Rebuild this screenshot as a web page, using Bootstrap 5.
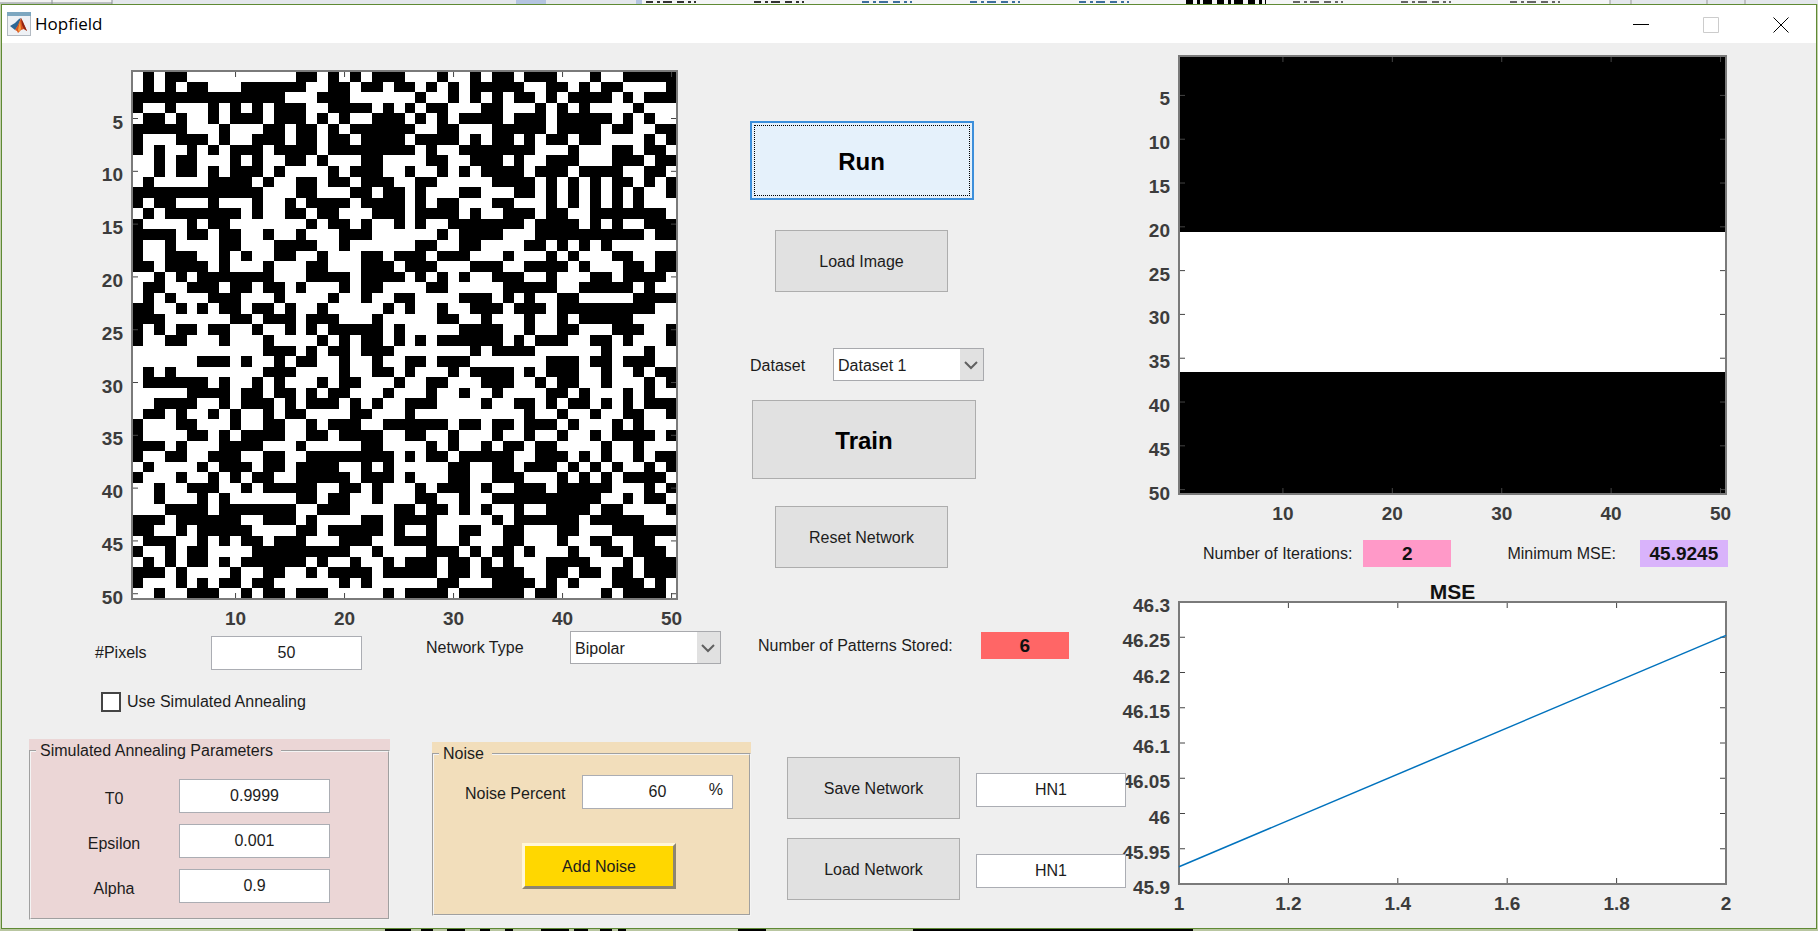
<!DOCTYPE html>
<html lang="en">
<head>
<meta charset="utf-8">
<meta name="viewport" content="width=device-width, initial-scale=1">
<title>Hopfield</title>
<link href="https://cdn.jsdelivr.net/npm/bootstrap@5.3.0/dist/css/bootstrap.min.css" rel="stylesheet">
<style>
  body { font: 16px/20px "Liberation Sans", Arial, sans-serif; color: #1c1c1c; background: #c3d0ac; }
  .desk-top, .desk-bottom { display: block; width: 100%; flex: none; }
  .app-window { background: #efefef; border: 1px solid #5f8a34; margin: 0 1px; }
  .title-bar { height: 38px; background: #fff; font: 17px/24px "Open Sans", "Noto Sans", sans-serif; color: #000; padding-left: 5px; }
  .win-btn { width: 70px; height: 38px; background: none; border: 0; padding: 0; }
  .work-area { display: grid; grid-template-columns: 748fr 376fr 690fr; }
  .work-area > * { min-width: 0; }
  .plot { display: block; width: 100%; height: auto; overflow: visible; }
  .plot text { font: bold 19px "Liberation Sans", Arial, sans-serif; fill: #3c3c3c; }
  .plot .plot-title { font-size: 21px; fill: #111; }
  .axis-box { fill: none; stroke: #7a7a7a; stroke-width: 2; }
  .tick { stroke: #444; stroke-width: 1; fill: none; }

  .form-control, .form-select, .btn { font: inherit; border-radius: 0; color: #1c1c1c; }
  .form-control { width: 151px; height: 34px; padding: 0; text-align: center; border: 1px solid #abadb3; background: #fff; }
  .form-select { width: 151px; height: 33px; padding: 2px 26px 0 4px; border: 1px solid #a8a9ad;
    background: #fff url("data:image/svg+xml,%3Csvg xmlns='http://www.w3.org/2000/svg' width='23' height='31'%3E%3Crect width='23' height='31' fill='%23e1e1e1'/%3E%3Cpath d='M5 13l6 6 6-6' fill='none' stroke='%23606060' stroke-width='2'/%3E%3C/svg%3E") no-repeat right center; background-size: 23px 31px; }
  .btn-gray { background: #e1e1e1; border: 1px solid #adadad; padding: 2px 0 0; width: 173px; height: 62px; }
  .btn-big { width: 224px; height: 79px; font-size: 24px; font-weight: bold; color: #000; }
  .btn-run { background: #e5f1fb; border: 2px solid #3c8fdb; outline: 1px dotted #000; outline-offset: -5px; }
  .btn-noise { width: 154px; height: 46px; padding: 1px 0 0; background: #ffd700; border: 3px solid; border-color: #fff6d8 #8d8571 #8d8571 #fff6d8; }
  .readout { width: 88px; height: 27px; font-size: 19px; line-height: 27px; font-weight: bold; text-align: center; color: #111; }
  .readout-red { background: #ff6666; }
  .readout-pink { background: #ff99c8; }
  .readout-violet { background: #d9b3fb; }

  .pixels-row { padding: 1px 0 0 93px; }
  .pixels-label { width: 116px; }
  .network-label { width: 144px; }
  .network-group { margin-left: 64px; }
  .pixels-group { padding-top: 5px; }
  .anneal-check { margin: 22px 0 0 99px; gap: 6px; }
  .anneal-check .form-check-input { width: 20px; height: 20px; margin: 0; float: none; border: 2px solid #444; border-radius: 0; background-color: #fff; }
  .panels { margin-top: 27px; padding-left: 27px; gap: 42px; }
  .param-panel { padding-top: 2px; }
  .param-panel fieldset { border: 2px groove #f4f4f4; height: 100%; }
  .param-panel legend { float: none; width: auto; margin: 0 0 0 5px; padding: 0 8px 0 4px; font-size: 16px; line-height: 20px; }
  .panel-rose, .panel-rose legend { background: #ebd6d6; }
  .panel-sand, .panel-sand legend { background: #f2debb; }
  .panel-rose { width: 361px; height: 181px; }
  .panel-sand { width: 319px; height: 174px; margin-top: 3px; }
  .panel-rose label { width: 130px; text-align: center; padding-top: 6px; }
  .param-rows { padding: 18px 0 0 18px; gap: 11px; }
  .noise-row { padding: 11px 0 0 31px; }
  .noise-row label { width: 117px; padding-top: 4px; }
  .percent-sign { position: absolute; right: 10px; top: 5px; }
  .noise-action { padding: 34px 0 0 88px; }

  .controls { position: relative; z-index: 1; padding-top: 78px; }
  .center-stack { width: 223px; }
  .gap-load { margin-top: 30px; }
  .dataset-row { margin-top: 56px; }
  .dataset-row label { width: 83px; padding-top: 2px; }
  .gap-train { margin: 19px 0 0 2px; }
  .gap-reset { margin-top: 27px; }
  .stored-row { margin: 64px 0 0 8px; gap: 28px; }
  .network-rows { margin: 98px 0 0 37px; gap: 19px; }
  .network-rows > div { gap: 16px; }
  .network-rows .form-control { margin-top: 16px; width: 150px; }
  .score-row { padding: 10px 0 9px 77px; }
  .score-mse { margin-left: 52px; padding-left: 4px; }
  .score-iterations { margin-left: 11px; }
</style>
</head>
<body class="d-flex flex-column min-vh-100">

<svg class="desk-top" height="4" viewBox="0 0 1818 4" preserveAspectRatio="none" aria-hidden="true">
  <rect width="1818" height="4" fill="#e4e7ec"/>
  <rect width="112" height="3" fill="#f2f2f2"/>
  <path d="M0 3h112M52 0v4M112 0v4" stroke="#8a8f94"/>
  <path d="M516 0h30v4h-30zM636 0h6v4h-6zM740 0h6v4h-6z" fill="#b4c4e0"/>
  <rect x="642" width="968" height="4" fill="#f4f5f6"/>
  <g fill="none" stroke-width="2" stroke-dasharray="7 4 3 3 9 5">
    <path d="M646 2h50M754 2h50" stroke="#333"/>
    <path d="M862 2h50M970 2h50M1079 2h50" stroke="#3e6f9d"/>
    <path d="M1186 2h80" stroke="#000" stroke-width="4"/>
    <path d="M1293 2h50M1401 2h50M1510 2h50" stroke="#666"/>
  </g>
  <path d="M1610 0v4M1631 0v4M1707 0v4M1745 0v4" stroke="#999"/>
</svg>

<div class="app-window d-flex flex-column flex-grow-1">
  <header class="title-bar d-flex align-items-center">
    <svg width="24" height="24" viewBox="0 0 24 24" aria-hidden="true">
      <rect x=".5" y=".5" width="23" height="23" fill="#eef1f5" stroke="#b3bac2"/>
      <rect width="24" height="4" fill="#7da7c0"/>
      <path d="M3 14l5-3 4-4 2-1-3 8-3 4z" fill="#2d6794"/>
      <path d="M8 18l3-5 3-7 2 4 4 9-3-2-3 1-3 3-1-2z" fill="#d9541e"/>
      <path d="M14 6l2 4 4 9-3-2-2-4z" fill="#8e2415"/>
      <path d="M13 9l1 8-2 3-1-2z" fill="#f5a142"/>
    </svg>
    <span class="ms-1 me-auto">Hopfield</span>
    <button class="win-btn" type="button" aria-label="Minimize"><svg width="16" height="16"><path d="M0 7.5h16" stroke="#000"/></svg></button>
    <button class="win-btn" type="button" aria-label="Maximize" disabled><svg width="16" height="16"><path d="M.5.5h15v15H.5z" fill="none" stroke="#ccc"/></svg></button>
    <button class="win-btn" type="button" aria-label="Close"><svg width="16" height="16"><path d="M.5.5l15 15M15.5.5l-15 15" stroke="#000"/></svg></button>
  </header>

  <main class="work-area flex-grow-1">
    <section>
      <svg class="plot" id="inputPlot" viewBox="2 43 748 587" role="img" aria-label="Noisy input pattern"></svg>
      <div class="pixels-row d-flex align-items-start">
        <div class="pixels-group d-flex align-items-center">
          <label class="pixels-label" for="pixels">#Pixels</label>
          <input class="form-control" id="pixels" value="50">
        </div>
        <div class="network-group d-flex align-items-center">
          <label class="network-label" for="networkType">Network Type</label>
          <select class="form-select" id="networkType"><option>Bipolar</option><option>Binary</option></select>
        </div>
      </div>
      <div class="anneal-check d-flex align-items-center">
        <input class="form-check-input" type="checkbox" id="useAnnealing">
        <label for="useAnnealing">Use Simulated Annealing</label>
      </div>
      <div class="panels d-flex align-items-start">
        <div class="param-panel panel-rose flex-shrink-0">
          <fieldset>
            <legend>Simulated Annealing Parameters</legend>
            <div class="param-rows d-flex flex-column">
              <div class="d-flex align-items-center"><label for="t0">T0</label><input class="form-control" id="t0" value="0.9999"></div>
              <div class="d-flex align-items-center"><label for="epsilon">Epsilon</label><input class="form-control" id="epsilon" value="0.001"></div>
              <div class="d-flex align-items-center"><label for="alpha">Alpha</label><input class="form-control" id="alpha" value="0.9"></div>
            </div>
          </fieldset>
        </div>
        <div class="param-panel panel-sand flex-shrink-0">
          <fieldset>
            <legend>Noise</legend>
            <div class="noise-row d-flex align-items-center">
              <label for="noisePercent">Noise Percent</label>
              <div class="position-relative">
                <input class="form-control" id="noisePercent" value="60">
                <span class="percent-sign">%</span>
              </div>
            </div>
            <div class="noise-action"><button class="btn btn-noise" type="button">Add Noise</button></div>
          </fieldset>
        </div>
      </div>
    </section>

    <section class="controls">
      <div class="center-stack d-flex flex-column align-items-center">
        <button class="btn btn-gray btn-big btn-run" type="button">Run</button>
        <button class="btn btn-gray gap-load" type="button">Load Image</button>
      </div>
      <div class="dataset-row d-flex align-items-center">
        <label for="dataset">Dataset</label>
        <select class="form-select" id="dataset"><option>Dataset 1</option><option>Dataset 2</option></select>
      </div>
      <button class="btn btn-gray btn-big gap-train d-block" type="button">Train</button>
      <div class="center-stack d-flex justify-content-center gap-reset">
        <button class="btn btn-gray" type="button">Reset Network</button>
      </div>
      <div class="stored-row d-flex align-items-center">
        <span>Number of Patterns Stored:</span>
        <output class="readout readout-red">6</output>
      </div>
      <div class="network-rows d-flex flex-column">
        <div class="d-flex align-items-start">
          <button class="btn btn-gray" type="button">Save Network</button>
          <input class="form-control" aria-label="Save network name" value="HN1">
        </div>
        <div class="d-flex align-items-start">
          <button class="btn btn-gray" type="button">Load Network</button>
          <input class="form-control" aria-label="Load network name" value="HN1">
        </div>
      </div>
    </section>

    <section>
      <svg class="plot" id="outputPlot" viewBox="1126 43 690 487" role="img" aria-label="Recalled pattern"></svg>
      <div class="score-row d-flex align-items-center">
        <span>Number of Iterations:</span>
        <output class="readout readout-pink score-iterations">2</output>
        <span class="score-mse">Minimum MSE:</span>
        <output class="readout readout-violet ms-4 px-1">45.9245</output>
      </div>
      <svg class="plot" id="msePlot" viewBox="1126 576 690 342" role="img" aria-label="MSE per iteration"></svg>
    </section>
  </main>
</div>

<svg class="desk-bottom" height="2" viewBox="0 0 1818 2" preserveAspectRatio="none" aria-hidden="true">
  <rect width="1818" height="2" fill="#b9c6a1"/>
  <path d="M385 1h26M421 1h12M447 1h18M480 1h10M505 1h8M541 1h28M574 1h14M600 1h12M618 1h8M738 1h28M913 1h280" stroke="#000" stroke-width="2"/>
</svg>

<script src="https://cdn.jsdelivr.net/npm/bootstrap@5.3.0/dist/js/bootstrap.bundle.min.js"></script>
<script>
// White runs of each of the 50 rows, as start-end column pairs.
const pattern = `0-1 2-3 5-15 17-18 19-20 21-22 25-28 29-31 32-33 35-36 39-42 43-45
0-1 2-3 4-5 7-10 16-18 20-21 23-24 26-27 28-29 30-31 36-38 40-41 42-43 45-49
14-17 20-26 27-29 30-31 32-33 34-35 37-38 39-40 44-45 46-47
1-3 4-7 8-9 10-11 12-13 16-18 22-23 24-25 26-27 29-32 34-37 38-39 40-41 42-46 47-50
0-1 3-4 5-7 8-9 12-13 16-17 18-19 20-22 25-26 27-28 29-30 34-35 38-39 44-45 46-47 48-50
5-8 9-12 14-15 17-18 19-20 26-28 30-33 38-39 43-44 46-48
1-4 7-8 9-11 14-15 17-18 20-21 25-26 30-31 32-33 35-36 37-38 40-41 43-47 48-49
1-2 3-5 6-7 8-9 12-13 17-18 26-27 28-30 37-40 41-44 46-47 49-50
0-2 3-4 6-9 10-11 12-14 16-17 18-21 23-27 29-31 34-35 36-38 41-44 47-48
0-2 3-4 6-7 8-9 12-13 14-18 19-20 23-25 26-28 29-30 31-32 36-37 40-41 45-47 49-50
0-1 2-7 11-12 13-15 17-18 20-21 24-26 28-33 37-38 39-40 41-42 43-44 46-47 48-49
12-15 17-20 22-23 25-26 27-30 32-35 37-38 39-40 41-42 43-44 45-46 47-49
1-2 4-7 8-11 12-14 15-16 20-21 25-26 27-28 30-33 35-38 39-40 41-42 43-44 45-46 47-50
0-1 2-3 10-11 12-14 16-17 19-22 25-26 30-31 32-34 37-38 40-42 49-50
1-5 6-7 9-16 17-18 20-21 22-24 25-26 27-29 36-37 41-42 43-44 45-47
4-5 7-8 10-12 13-15 16-19 22-28 29-30 34-37 47-48
1-3 4-8 10-13 17-19 20-26 28-30 32-36 38-39 40-41 42-43 44-50
1-3 6-8 9-10 11-13 15-17 18-21 23-24 27-28 31-34 35-38 39-40 41-44 46-48
2-3 7-8 9-12 13-16 18-21 24-25 28-31 34-36 40-41 42-45 47-48
0-2 3-4 5-6 13-16 20-21 25-26 27-28 29-30 31-33 36-38 39-42 44-45 49-50
0-1 3-5 8-9 11-12 14-15 16-19 20-21 23-27 29-34 39-41 46-47 48-50
0-1 2-3 4-7 10-13 14-18 19-21 22-24 26-30 33-34 35-36 37-39 41-46
2-4 5-6 7-8 10-11 13-14 15-17 18-23 24-25 26-28 29-31 34-35 38-39 48-50
3-9 11-12 15-16 19-22 23-28 30-32 33-36 37-39 40-41 46-50
1-2 3-4 6-7 9-11 12-14 15-16 17-18 23-24 25-30 34-36 37-39 41-44 47-49
1-3 5-8 9-12 13-17 18-19 20-21 23-24 25-26 27-28 34-35 36-37 40-42 44-45 46-49
0-12 15-16 17-18 20-21 24-31 32-33 37-43 44-47 48-50
0-6 9-10 11-13 14-15 17-19 20-22 23-25 27-28 31-38 41-42 44-45 48-50
0-1 2-3 4-12 15-19 20-22 24-25 26-29 30-31 35-36 37-38 41-43 44-46 47-48
0-1 7-8 9-11 12-13 14-17 18-19 21-24 25-27 29-32 35-37 38-39 41-43 44-47 48-49
0-5 9-10 12-13 15-16 17-18 20-23 24-27 28-30 31-33 34-38 40-41 42-45 46-47 48-50
0-2 6-8 9-10 13-14 15-16 19-20 21-22 23-25 28-32 33-35 37-38 39-40 42-43 44-45 46-47
0-1 3-4 5-7 8-9 10-12 13-14 16-20 22-25 26-36 37-39 40-42 43-45 47-49
1-4 6-9 10-12 14-16 17-18 21-23 29-30 32-33 35-36 39-40 41-44 45-46 47-50
1-5 7-8 9-10 14-16 18-19 23-25 27-29 30-33 34-36 37-39 40-42 43-44 48-49
3-4 5-8 12-15 16-21 23-27 28-29 30-32 33-34 36-37 39-43 44-46 47-50
1-3 5-7 10-12 14-16 24-25 26-27 29-30 35-37 40-41 42-43 44-46 47-48
0-1 2-6 7-8 11-12 14-15 19-21 22-23 24-29 31-33 35-36 39-40 41-42 43-44 45-47 48-49
1-4 5-7 8-9 10-11 13-15 20-21 24-25 26-29 31-33 36-39 40-41 42-43 44-45 49-50
0-2 3-5 8-10 11-12 17-19 21-22 23-26 27-28 31-32 33-35 38-39 44-47 48-49
0-2 3-6 7-8 9-15 17-18 20-22 23-26 28-30 31-33 43-45 46-47 49-50
0-3 7-8 15-17 20-24 26-27 29-30 31-32 33-35 36-38 42-43 45-49
3-4 10-12 15-16 17-21 23-24 28-33 34-35 41-42 47-50
2-4 5-6 11-15 17-18 23-24 25-27 28-30 32-34 36-39 41-44
0-1 4-6 7-8 9-10 12-13 16-19 22-24 28-30 31-34 36-39 40-42 44-46 48-50
1-3 4-5 7-11 20-22 23-27 30-31 32-33 35-36 37-40 41-43 45-46 49-50
0-1 2-3 4-5 7-8 9-10 16-17 18-20 21-23 24-25 28-29 31-32 33-34 35-38 42-45 46-47
3-4 5-9 10-12 14-16 17-18 22-23 28-29 31-32 36-38 40-41 43-44 46-47
1-4 5-6 7-8 10-11 13-19 20-21 22-28 30-33 37-38 39-40 41-44 47-48 49-50
0-2 3-5 8-10 11-12 14-15 18-23 24-25 29-30 36-37 39-43 44-45 49-50`.split("\n");

// Frame, tick marks and tick labels; xs and ys hold [fraction of the axis, label].
function axes(b, xs, ys) {
  const x2 = b.x + b.w, y2 = b.y + b.h;
  let ticks = "", labels = "";
  for (const [f, t] of xs) {
    const x = b.x + f * b.w;
    ticks += `M${x} ${b.y}v6M${x} ${y2}v-6`;
    labels += `<text x="${x}" y="${y2 + 26}" text-anchor="middle">${t}</text>`;
  }
  for (const [f, t] of ys) {
    const y = b.y + f * b.h;
    ticks += `M${b.x} ${y}h6M${x2} ${y}h-6`;
    labels += `<text x="${b.x - 9}" y="${y + 10}" text-anchor="end">${t}</text>`;
  }
  return `<path class="tick" d="${ticks}"/><rect class="axis-box" x="${b.x}" y="${b.y}" width="${b.w}" height="${b.h}"/>${labels}`;
}
function fillRect(b, color) {
  return `<rect x="${b.x}" y="${b.y}" width="${b.w}" height="${b.h}" fill="${color}"/>`;
}
const pixelX = [10, 20, 30, 40, 50].map(n => [(n - .5) / 50, n]);
const pixelY = [5, 10, 15, 20, 25, 30, 35, 40, 45, 50].map(n => [(n - .5) / 50, n]);

const a = { x: 132, y: 71, w: 545, h: 528 };
let cells = "";
pattern.forEach((row, r) => row.split(" ").forEach(run => {
  const [s, e] = run.split("-").map(Number);
  cells += `M${a.x + s * a.w / 50} ${a.y + r * a.h / 50}h${(e - s) * a.w / 50}v${a.h / 50}h${(s - e) * a.w / 50}z`;
}));
document.getElementById("inputPlot").innerHTML =
  fillRect(a, "#000") + `<path fill="#fff" shape-rendering="crispEdges" d="${cells}"/>` + axes(a, pixelX, pixelY);

const o = { x: 1179, y: 56, w: 547, h: 438 };
document.getElementById("outputPlot").innerHTML =
  fillRect(o, "#000") + fillRect({ x: o.x, y: 232, w: o.w, h: 140 }, "#fff") + axes(o, pixelX, pixelY);

const m = { x: 1179, y: 602, w: 547, h: 282 };
const mseX = ["1", "1.2", "1.4", "1.6", "1.8", "2"].map((t, i) => [i / 5, t]);
const mseY = ["46.3", "46.25", "46.2", "46.15", "46.1", "46.05", "46", "45.95", "45.9"].map((t, i) => [i / 8, t]);
const yOf = v => m.y + (46.3 - v) / .4 * m.h;
document.getElementById("msePlot").innerHTML =
  fillRect(m, "#fff") + axes(m, mseX, mseY) +
  `<path d="M${m.x} ${yOf(45.9245)}L${m.x + m.w} ${yOf(46.2527)}" stroke="#0072bd" stroke-width="1.5"/>` +
  `<text class="plot-title" x="${m.x + m.w / 2}" y="599" text-anchor="middle">MSE</text>`;
</script>
</body>
</html>
